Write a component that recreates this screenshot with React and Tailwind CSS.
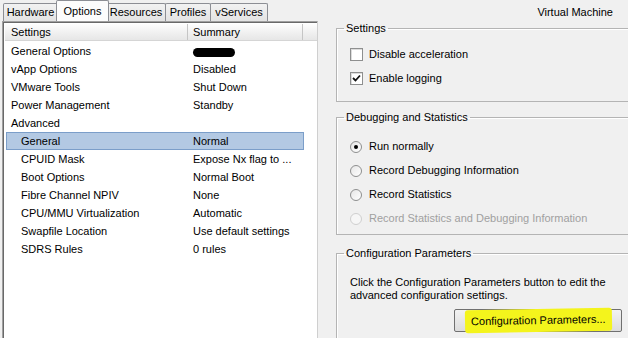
const rows = [
  { name: "General Options", summary: null, indent: false },
  { name: "vApp Options", summary: "Disabled", indent: false },
  { name: "VMware Tools", summary: "Shut Down", indent: false },
  { name: "Power Management", summary: "Standby", indent: false },
  { name: "Advanced", summary: "", indent: false },
  { name: "General", summary: "Normal", indent: true, selected: true },
  { name: "CPUID Mask", summary: "Expose Nx flag to ...", indent: true },
  { name: "Boot Options", summary: "Normal Boot", indent: true },
  { name: "Fibre Channel NPIV", summary: "None", indent: true },
  { name: "CPU/MMU Virtualization", summary: "Automatic", indent: true },
  { name: "Swapfile Location", summary: "Use default settings", indent: true },
  { name: "SDRS Rules", summary: "0 rules", indent: true },
];

const tabs = [
  { label: "Hardware", w: "w-[55px]" },
  { label: "Options", w: "w-[53px]", active: true },
  { label: "Resources", w: "w-[60px]" },
  { label: "Profiles", w: "w-[46px]" },
  { label: "vServices", w: "w-[58px]" },
];

function Tab({ label, w, active }) {
  if (active) {
    return (
      <div
        className={`${w} h-[21px] -mx-[2px] z-10 flex items-start justify-center pt-[2px] bg-[#fcfcfc] border border-b-0 border-[#8c8e94] rounded-t-[2px]`}
      >
        {label}
      </div>
    );
  }
  return (
    <div
      className={`${w} h-[18px] flex items-center justify-center bg-gradient-to-b from-[#f2f2f2] to-[#e3e3e3] border border-b-0 border-[#8c8e94] rounded-t-[2px] -ml-px first:ml-0`}
    >
      {label}
    </div>
  );
}

function CheckBox({ checked }) {
  return (
    <div className="w-[13px] h-[13px] bg-white border border-[#8e8f8f] flex items-center justify-center shadow-[inset_1px_1px_0_#dcdcdc]">
      {checked && (
        <svg width="9" height="9" viewBox="0 0 9 9">
          <path d="M1 4 L3.5 6.5 L8 1.5" fill="none" stroke="#111" strokeWidth="1.8" />
        </svg>
      )}
    </div>
  );
}

function Radio({ checked, disabled }) {
  return (
    <div
      className={`w-[12px] h-[12px] rounded-full border flex items-center justify-center ${
        disabled ? "border-[#cfcfcf] bg-[#f6f6f6]" : "border-[#8e8f8f] bg-gradient-to-br from-[#e6e6e6] to-white"
      }`}
    >
      {checked && <div className="w-[4px] h-[4px] rounded-full bg-black" />}
    </div>
  );
}

function GroupBox({ title, h, children }) {
  return (
    <fieldset className={`${h} w-[300px] border border-[#b4b4b4] shadow-[inset_1px_1px_0_#fff] px-0`}>
      <legend className="ml-[7px] px-[2px] leading-[13px]">{title}</legend>
      {children}
    </fieldset>
  );
}

export default function App() {
  return (
    <div
      className="w-[628px] h-[338px] overflow-hidden bg-[#f0f0f0] text-[11px] text-black flex flex-col"
      style={{ fontFamily: '"Liberation Sans", Arial, sans-serif' }}
    >
      <div className="h-[21px] flex items-end pl-[3px] shrink-0">
        {tabs.map((t) => (
          <Tab key={t.label} {...t} />
        ))}
        <div className="ml-auto self-start pt-[4px] pr-[15px]">Virtual Machine</div>
      </div>

      <div className="flex flex-1 min-h-0">
        <div className="shrink-0 ml-[2px] w-[316px] h-[320px] bg-white border-l border-t border-r border-[#a0a0a0] border-r-[#cfcfcf] shadow-[inset_1px_1px_0_#696969] pl-[2px] pt-[1px] flex flex-col">
          <div className="h-[17px] flex bg-gradient-to-b from-[#fdfdfd] to-[#e6e6e6] border-b border-[#d5d5d5] mt-px">
            <div className="w-[183px] pl-[6px] flex items-center border-r border-[#c5c5c5]">Settings</div>
            <div className="w-[115px] pl-[5px] flex items-center border-r border-[#c5c5c5]">Summary</div>
            <div className="flex-1" />
          </div>
          <div className="pt-px">
            {rows.map((r) => (
              <div
                key={r.name}
                className={`h-[18px] flex items-center w-[298px] ml-px ${
                  r.selected ? "bg-[#b3c9e3] border border-[#7b9ec9]" : "border border-transparent"
                }`}
              >
                <div className={`w-[182px] ${r.indent ? "pl-[14px]" : "pl-[4px]"}`}>{r.name}</div>
                <div className="pl-[4px] flex-1">
                  {r.summary === null ? (
                    <div className="w-[42px] h-[9px] rounded-full bg-black mt-[2px]" />
                  ) : (
                    r.summary
                  )}
                </div>
              </div>
            ))}
          </div>
        </div>

        <div className="shrink-0 pl-[18px] flex flex-col">
          <div className="mt-px">
            <GroupBox title="Settings" h="h-[80px]">
              <div className="pl-[13px] pt-[13px] flex flex-col gap-[11px]">
                <div className="flex items-center gap-[6px] h-[13px]">
                  <CheckBox />
                  <span>Disable acceleration</span>
                </div>
                <div className="flex items-center gap-[6px] h-[13px]">
                  <CheckBox checked />
                  <span>Enable logging</span>
                </div>
              </div>
            </GroupBox>
          </div>
          <div className="mt-[9px]">
            <GroupBox title="Debugging and Statistics" h="h-[124px]">
              <div className="pl-[13px] pt-[16px] flex flex-col gap-[11px]">
                <div className="flex items-center gap-[7px] h-[13px]">
                  <Radio checked />
                  <span>Run normally</span>
                </div>
                <div className="flex items-center gap-[7px] h-[13px]">
                  <Radio />
                  <span>Record Debugging Information</span>
                </div>
                <div className="flex items-center gap-[7px] h-[13px]">
                  <Radio />
                  <span>Record Statistics</span>
                </div>
                <div className="flex items-center gap-[7px] h-[13px] text-[#a0a0a0]">
                  <Radio disabled />
                  <span>Record Statistics and Debugging Information</span>
                </div>
              </div>
            </GroupBox>
          </div>
          <div className="mt-[12px]">
            <GroupBox title="Configuration Parameters" h="h-[110px]">
              <div className="pl-[13px] pt-[16px] leading-[13px]">
                Click the Configuration Parameters button to edit the
                <br />
                advanced configuration settings.
              </div>
              <button className="ml-[117px] mt-[7px] w-[168px] h-[23px] bg-gradient-to-b from-[#f2f2f2] to-[#dcdcdc] border border-[#707070] rounded-[2px] flex items-center justify-center">
                <span className="bg-[#f4f41c] px-[6px] py-[3px] rounded-[3px] -rotate-1">Configuration Parameters...</span>
              </button>
            </GroupBox>
          </div>
        </div>
      </div>
    </div>
  );
}
